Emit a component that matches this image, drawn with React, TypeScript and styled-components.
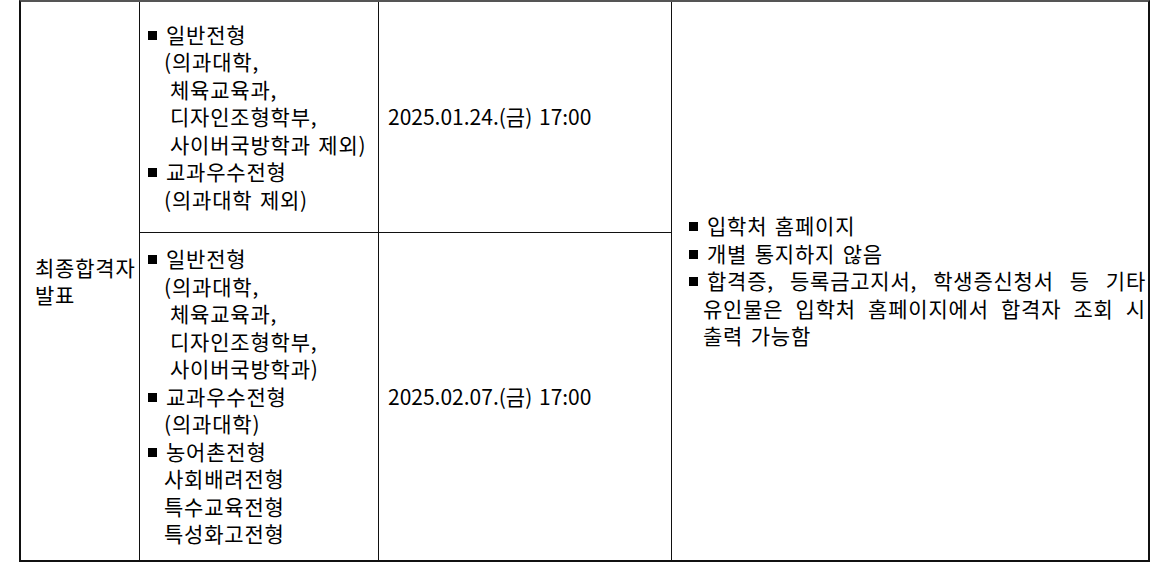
import styled, { createGlobalStyle } from "styled-components";

const GlobalStyle = createGlobalStyle`
  body {
    margin: 0;
    background: #fff;
    color: #000;
    font-family: "Noto Sans CJK KR", "Noto Sans", sans-serif;
  }
`;

const Page = styled.div`
  padding-left: 19px;
`;

const Table = styled.div`
  display: grid;
  width: 1131px;
  box-sizing: border-box;
  grid-template-columns: 118px 238px 292px 476px;
  grid-template-rows: 230px 327px;
  gap: 1px;
  background: #111;
  border: 2px solid #111;
  border-top-color: #555;
`;

const Cell = styled.div<{
  $col: number;
  $row: string;
  $padLeft: number;
  $padRight?: number;
  $spacing?: number;
}>`
  grid-column: ${(p) => p.$col};
  grid-row: ${(p) => p.$row};
  background: #fff;
  display: flex;
  flex-direction: column;
  justify-content: center;
  padding-left: ${(p) => p.$padLeft}px;
  padding-right: ${(p) => p.$padRight ?? 0}px;
  font-size: 21px;
  line-height: 27.5px;
  letter-spacing: ${(p) => p.$spacing ?? 0.8}px;
  word-spacing: 2px;
  white-space: nowrap;
`;

const Line = styled.div<{ $indent?: number; $justify?: boolean }>`
  padding-left: ${(p) => p.$indent ?? 0}px;
  text-align: ${(p) => (p.$justify ? "justify" : "left")};
  text-align-last: ${(p) => (p.$justify ? "justify" : "auto")};
  white-space: ${(p) => (p.$justify ? "normal" : "nowrap")};
`;

const Bullet = styled.span`
  display: inline-block;
  width: 9px;
  height: 9px;
  background: #000;
  margin-right: 9px;
  vertical-align: 3px;
`;

type Item = [kind: "b" | "i1" | "i2", text: string];

const indentOf = { b: 0, i1: 16, i2: 22 };

const firstGroup: Item[] = [
  ["b", "일반전형"],
  ["i1", "(의과대학,"],
  ["i2", "체육교육과,"],
  ["i2", "디자인조형학부,"],
  ["i2", "사이버국방학과 제외)"],
  ["b", "교과우수전형"],
  ["i1", "(의과대학 제외)"],
];

const secondGroup: Item[] = [
  ["b", "일반전형"],
  ["i1", "(의과대학,"],
  ["i2", "체육교육과,"],
  ["i2", "디자인조형학부,"],
  ["i2", "사이버국방학과)"],
  ["b", "교과우수전형"],
  ["i1", "(의과대학)"],
  ["b", "농어촌전형"],
  ["i1", "사회배려전형"],
  ["i1", "특수교육전형"],
  ["i1", "특성화고전형"],
];

const ItemList = ({ items }: { items: Item[] }) => (
  <>
    {items.map(([kind, text], i) => (
      <Line key={i} $indent={indentOf[kind]}>
        {kind === "b" && <Bullet />}
        {text}
      </Line>
    ))}
  </>
);

const App = () => {
  return (
    <Page>
      <GlobalStyle />
      <Table>
        <Cell $col={1} $row="1 / 3" $padLeft={14}>
          <Line>최종합격자</Line>
          <Line>발표</Line>
        </Cell>
        <Cell $col={2} $row="1" $padLeft={8}>
          <ItemList items={firstGroup} />
        </Cell>
        <Cell $col={3} $row="1" $padLeft={9} $spacing={0}>
          <Line>2025.01.24.(금) 17:00</Line>
        </Cell>
        <Cell $col={2} $row="2" $padLeft={8}>
          <ItemList items={secondGroup} />
        </Cell>
        <Cell $col={3} $row="2" $padLeft={9} $spacing={0}>
          <Line>2025.02.07.(금) 17:00</Line>
        </Cell>
        <Cell $col={4} $row="1 / 3" $padLeft={17} $padRight={2}>
          <Line>
            <Bullet />
            입학처 홈페이지
          </Line>
          <Line>
            <Bullet />
            개별 통지하지 않음
          </Line>
          <Line $justify>
            <Bullet />
            합격증, 등록금고지서, 학생증신청서 등 기타
          </Line>
          <Line $indent={14} $justify>
            유인물은 입학처 홈페이지에서 합격자 조회 시
          </Line>
          <Line $indent={14}>출력 가능함</Line>
        </Cell>
      </Table>
    </Page>
  );
};

export default App;
